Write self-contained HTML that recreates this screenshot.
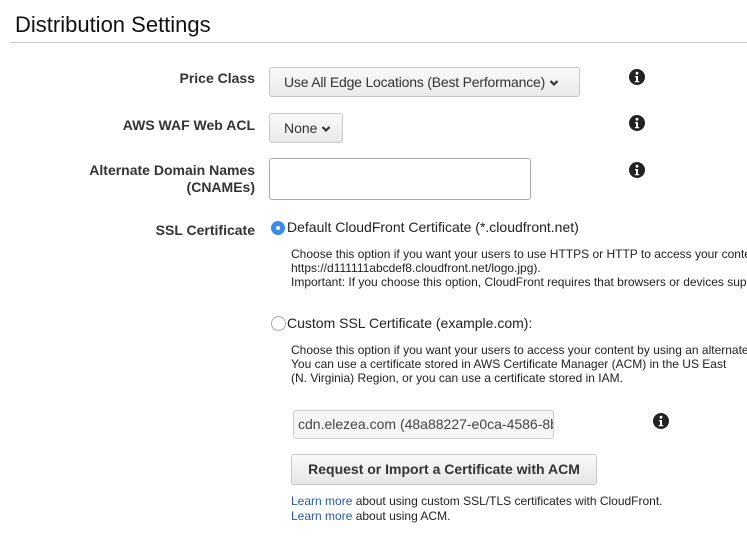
<!DOCTYPE html>
<html><head><meta charset="utf-8"><style>
body{margin:0;width:747px;height:547px;background:#fff;position:relative;overflow:hidden;font-family:"Liberation Sans",Arial,sans-serif;color:#222}
.a{position:absolute;white-space:nowrap}
.lbl{position:absolute;right:492px;font-weight:bold;font-size:14px;text-align:right;color:#333}
.sel{position:absolute;border:1px solid #c8c8c8;border-radius:3px;background:linear-gradient(#fafafa,#e9e9e9);font-size:14px;color:#333;box-sizing:border-box;line-height:28px;padding-left:14px;white-space:nowrap;overflow:hidden}
.info{position:absolute;width:16px;height:16px}
.d{font-size:12px;line-height:14px;color:#222;width:456px;overflow:hidden}
a{color:#2a5aa8;text-decoration:none}
</style></head><body>
<div class="a" style="left:15px;top:12px;font-size:22px;color:#111">Distribution Settings</div>
<div class="a" style="left:10px;top:42px;width:737px;height:1px;background:#c8c8c8"></div>

<div class="lbl" style="top:70px">Price Class</div>
<div class="sel" style="left:269px;top:67px;width:311px;height:30px;letter-spacing:-0.2px">Use All Edge Locations (Best Performance) <svg width="10" height="8" viewBox="0 0 10 8" style="vertical-align:middle"><path d="M1.5 2l3.5 3.5L8.5 2" stroke="#333" stroke-width="2.2" fill="none"/></svg></div>

<div class="lbl" style="top:117px">AWS WAF Web ACL</div>
<div class="sel" style="left:269px;top:113px;width:74px;height:30px">None <svg width="10" height="8" viewBox="0 0 10 8" style="vertical-align:middle"><path d="M1.5 2l3.5 3.5L8.5 2" stroke="#333" stroke-width="2.2" fill="none"/></svg></div>

<div class="lbl" style="top:162px;line-height:17px">Alternate Domain Names<br>(CNAMEs)</div>
<div class="a" style="left:269px;top:158px;width:262px;height:42px;border:1px solid #aaa;border-radius:3px;box-sizing:border-box"></div>

<div class="lbl" style="top:222px">SSL Certificate</div>
<div class="a" style="left:271px;top:221px;width:14px;height:14px;border-radius:50%;background:#3b8de8"><div style="position:absolute;left:5px;top:5px;width:4px;height:4px;border-radius:50%;background:#fff"></div></div>
<div class="a" style="left:287px;top:219px;font-size:14px">Default CloudFront Certificate (*.cloudfront.net)</div>
<div class="a d" style="left:291px;top:247px">Choose this option if you want your users to use HTTPS or HTTP to access your content<br>https://d111111abcdef8.cloudfront.net/logo.jpg).<br>Important: If you choose this option, CloudFront requires that browsers or devices sup</div>

<div class="a" style="left:271px;top:316px;width:13px;height:13px;border-radius:50%;border:1px solid #aaa;background:#fff"></div>
<div class="a" style="left:287px;top:315px;font-size:14px">Custom SSL Certificate (example.com):</div>
<div class="a d" style="left:291px;top:343px">Choose this option if you want your users to access your content by using an alternate<br>You can use a certificate stored in AWS Certificate Manager (ACM) in the US East<br>(N. Virginia) Region, or you can use a certificate stored in IAM.</div>

<div class="a" style="left:293px;top:410px;width:261px;height:29px;border:1px solid #ccc;border-radius:3px;background:#f5f5f5;box-sizing:border-box;overflow:hidden;font-size:14px;line-height:27px;padding-left:4px;color:#444">cdn.elezea.com (48a88227-e0ca-4586-8b3e)</div>

<div class="a" style="left:291px;top:454px;width:306px;height:31px;border:1px solid #c8c8c8;border-radius:3px;background:linear-gradient(#fafafa,#e6e6e6);box-sizing:border-box;text-align:center;font-weight:bold;font-size:14px;line-height:29px;color:#333">Request or Import a Certificate with ACM</div>

<div class="a d" style="left:291px;top:494px;line-height:15px"><a>Learn more</a> about using custom SSL/TLS certificates with CloudFront.<br><a>Learn more</a> about using ACM.</div>

<svg class="info" style="left:629px;top:69px" viewBox="0 0 16 16"><circle cx="8" cy="8" r="8" fill="#222"/><circle cx="8" cy="4.2" r="1.4" fill="#fff"/><path d="M6 7h3v5h1.2v1.3H5.8V12H7V8.3H6z" fill="#fff"/></svg>
<svg class="info" style="left:629px;top:115px" viewBox="0 0 16 16"><circle cx="8" cy="8" r="8" fill="#222"/><circle cx="8" cy="4.2" r="1.4" fill="#fff"/><path d="M6 7h3v5h1.2v1.3H5.8V12H7V8.3H6z" fill="#fff"/></svg>
<svg class="info" style="left:629px;top:162px" viewBox="0 0 16 16"><circle cx="8" cy="8" r="8" fill="#222"/><circle cx="8" cy="4.2" r="1.4" fill="#fff"/><path d="M6 7h3v5h1.2v1.3H5.8V12H7V8.3H6z" fill="#fff"/></svg>
<svg class="info" style="left:653px;top:413px" viewBox="0 0 16 16"><circle cx="8" cy="8" r="8" fill="#222"/><circle cx="8" cy="4.2" r="1.4" fill="#fff"/><path d="M6 7h3v5h1.2v1.3H5.8V12H7V8.3H6z" fill="#fff"/></svg>
</body></html>
